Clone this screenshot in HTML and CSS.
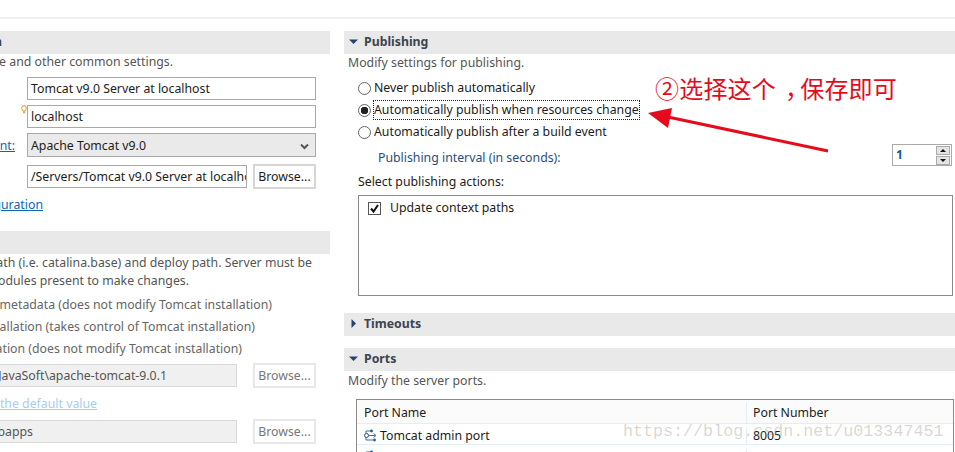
FILE: index.html
```html
<!DOCTYPE html>
<html lang="en">
<head>
<meta charset="utf-8">
<title>Server overview</title>
<link rel="stylesheet" href="styles.css">
</head>
<body>
<div class="topline"></div>
<main class="columns">
  <section class="left">
    <div class="bar"><span class="end e3 bartitle">General Information</span></div>
    <p class="end e173 desc d1">Specify the host name and other common settings.</p>
    <div class="form">
      <div class="row r1"><div class="field f289">Tomcat v9.0 Server at localhost</div></div>
      <div class="row r2"><div class="field f289">localhost</div></div>
      <div class="row r3"><div class="select"><span>Apache Tomcat v9.0</span><svg class="chev" width="9" height="7" viewBox="0 0 9 7"><path d="M1 1.500 4.500 5 8 1.500" fill="none" stroke="#555" stroke-width="2"/></svg></div></div>
      <div class="row r4"><div class="field f220 nowrapclip">/Servers/Tomcat v9.0 Server at localhost.config</div><button class="btn">Browse...</button></div>
    </div>
    <div class="end e15 link runtime">Runtime Environment:</div>
    <svg class="bulb" width="6" height="9" viewBox="0 0 6 9"><path d="M.7 3a2.300 2.300 0 1 1 4.600 0c0 1-1 2-1.300 3.200H2C1.700 5 .7 4 .7 3Z" fill="#fff" stroke="#e09030"/><path d="M2 7.700h2" stroke="#e09030"/></svg>
    <a class="end e43 link cfg">Open launch configuration</a>
    <div class="bar bar2"></div>
    <p class="end e312 desc d2">Specify the server path (i.e. catalina.base) and deploy path. Server must be</p>
    <p class="end e189 desc d3">published with no modules present to make changes.</p>
    <p class="end e272 muted m1">Use workspace metadata (does not modify Tomcat installation)</p>
    <p class="end e255 muted m2">Use Tomcat installation (takes control of Tomcat installation)</p>
    <p class="end e242 muted m3">Use custom location (does not modify Tomcat installation)</p>
    <div class="row r5"><div class="field off f237"><span class="end e167 infield">C:\Program Files\JavaSoft\apache-tomcat-9.0.1</span></div><button class="btn off">Browse...</button></div>
    <a class="end e97 link off-link">Set deploy path to the default value</a>
    <div class="row r6"><div class="field off f237"><span class="end e33 infield">wtpwebapps</span></div><button class="btn off">Browse...</button></div>
  </section>

  <section class="right">
    <div class="bar"><svg class="tw" width="9" height="9" viewBox="0 0 9 9"><path d="M0 2.500h9L4.500 7Z" fill="#24456e"/></svg><span class="bartitle">Publishing</span></div>
    <p class="desc rd1">Modify settings for publishing.</p>
    <div class="radios">
      <label class="radio"><span class="dot"></span><span>Never publish automatically</span></label>
      <label class="radio"><span class="dot on"></span><span class="focus">Automatically publish when resources change</span></label>
      <label class="radio"><span class="dot"></span><span>Automatically publish after a build event</span></label>
    </div>
    <div class="interval">
      <span class="intlabel">Publishing interval (in seconds):</span>
      <div class="spinner"><span class="val">1</span><span class="spins"><span class="spin"><i class="up"></i></span><span class="spin"><i class="down"></i></span></span></div>
    </div>
    <div class="actlabel">Select publishing actions:</div>
    <div class="actions">
      <div class="check"><svg class="cb" width="13" height="13" viewBox="0 0 13 13"><rect x=".5" y=".5" width="12" height="12" fill="#fff" stroke="#555"/><path d="M3 6.500 5.500 9.500 10 3" fill="none" stroke="#111" stroke-width="2"/></svg><span>Update context paths</span></div>
    </div>
    <div class="bar timeouts"><svg class="tw" width="9" height="9" viewBox="0 0 9 9"><path d="M2.500 0v9L7 4.500Z" fill="#24456e"/></svg><span class="bartitle">Timeouts</span></div>
    <div class="bar ports"><svg class="tw" width="9" height="9" viewBox="0 0 9 9"><path d="M0 2.500h9L4.500 7Z" fill="#24456e"/></svg><span class="bartitle">Ports</span></div>
    <p class="desc rd2">Modify the server ports.</p>
    <div class="table">
      <div class="tr th"><div class="c1">Port Name</div><div class="c2">Port Number</div></div>
      <div class="tr"><div class="c1"><svg class="port" width="14" height="14" viewBox="0 0 14 14"><path d="M2 2h5M2 2v9h7M4 6.500h7M9.500 4.500l2.500 2-2.500 2" fill="none" stroke="#3a6ea5"/><circle cx="7.500" cy="2" r="1.400" fill="#1f5a96"/><circle cx="10.500" cy="11" r="1.400" fill="#1f5a96"/><circle cx="2.500" cy="6.500" r="2" fill="#fff" stroke="#1f5a96"/></svg>Tomcat admin port</div><div class="c2">8005</div></div>
      <div class="tr"><div class="c1"><svg class="port" width="14" height="14" viewBox="0 0 14 14"><path d="M2 2h5M2 2v9h7M4 6.500h7M9.500 4.500l2.500 2-2.500 2" fill="none" stroke="#3a6ea5"/><circle cx="7.500" cy="2" r="1.400" fill="#1f5a96"/><circle cx="10.500" cy="11" r="1.400" fill="#1f5a96"/><circle cx="2.500" cy="6.500" r="2" fill="#fff" stroke="#1f5a96"/></svg></div><div class="c2"></div></div>
    </div>
  </section>
</main>
<div class="note">②选择这个<span class="comma">，</span>保存即可</div>
<svg class="arrow" width="200" height="60" viewBox="0 0 200 60"><path d="M188 47 28 13" stroke="#e60b1c" stroke-width="3" fill="none"/><path d="M8 9 32 4 28 24Z" fill="#e60b1c"/></svg>
<div class="wm">https://blog.csdn.net/u013347451</div>
</body>
</html>
```
FILE: styles.css
```css
html, body { margin: 0; padding: 0; height: 452px; overflow: hidden; background: #fff; }
body { position: relative; font: 12.300px/18px "Noto Sans", "Open Sans", sans-serif; color: #1c1c1c; }
p { margin: 0; }

.topline { height: 2px; margin-top: 17px; background: #f0f0f0; }
.columns { display: flex; margin-top: 12px; }
.left { position: relative; width: 330px; flex: none; }
.right { width: 611px; flex: none; margin-left: 14px; }

.bar { height: 23px; background: #e9e9e9; display: flex; align-items: center; }
.bartitle { font-weight: 700; color: #3c4450; font-size: 12.300px; position: relative; top: -1px; }
.tw { margin: 0 6px 0 5px; flex: none; position: relative; top: -1px; }
.end { display: flex; justify-content: flex-end; white-space: nowrap; }
.e3 { width: 2px; } .e15 { width: 15px; } .e33 { width: 33px; } .e43 { width: 43px; }
.e97 { width: 97px; } .e167 { width: 167px; } .e173 { width: 173px; } .e189 { width: 189px; }
.e242 { width: 242px; } .e255 { width: 255px; } .e272 { width: 272px; } .e312 { width: 312px; }

.desc { color: #555; }
.d1 { margin-top: -1px; }
.link { color: #0a67b8; text-decoration: underline; }

.form { margin-top: 6px; }
.row { display: flex; margin-left: 27px; align-items: center; }
.field { box-sizing: border-box; height: 23px; line-height: 21px; border: 1px solid #a9a9a9; padding-left: 3px; background: #fff; overflow: hidden; white-space: nowrap; }
.f289 { width: 289px; }
.f220 { width: 220px; }
.f237 { width: 237px; margin-left: -27px; padding-left: 0; border-left: 0; }
.field.off { background: #f0f0f0; border-color: #d9d9d9; color: #555; }
.btn { box-sizing: border-box; width: 63px; height: 25px; margin-left: 6px; padding: 0; font: inherit; color: #1c1c1c; background: #fff; border: 2px solid #d6d6d6; }
.btn.off { margin-left: 16px; color: #777; border-color: #e8e8e8; }
.r2 { margin-top: 5px; }
.r3 { margin-top: 5px; }
.r4 { margin-top: 7px; }
.select { box-sizing: border-box; width: 289px; height: 24px; display: flex; align-items: center; justify-content: space-between; padding: 2px 6px 0 3px; background: #eaeaea; border: 1px solid #a9a9a9; }
.runtime { position: absolute; top: 106px; left: 0; }
.bulb { position: absolute; top: 74px; left: 21px; }
.cfg { margin-top: 7px; }
.bar2 { margin-top: 17px; }
.d2 { margin-top: 0; }
.muted { color: #666; }
.m1 { margin-top: 6px; }
.m2 { margin-top: 4px; }
.m3 { margin-top: 4px; }
.r5 { margin-top: 5px; }
.off-link { margin-top: 7px; color: #a8cdf0; }
.r6 { margin-top: 6px; }

.rd1 { margin-top: 0; padding-left: 4px; }
.radios { margin: 7px 0 0 14px; display: flex; flex-direction: column; gap: 4px; }
.radio { display: flex; align-items: center; height: 18px; gap: 3px; }
.dot { box-sizing: border-box; width: 13px; height: 13px; border: 1px solid #666; border-radius: 50%; background: #fff; flex: none; }
.dot.on { background: radial-gradient(circle, #222 0 3.500px, #fff 4px); }
.focus { outline: 1px dotted #222; outline-offset: 0; }
.interval { display: flex; align-items: center; justify-content: space-between; height: 22px; margin-top: 3px; padding: 0 3px 0 34px; }
.intlabel { color: #24507f; position: relative; top: 3px; }
.spinner { box-sizing: border-box; width: 60px; height: 22px; border: 1px solid #aaa; display: flex; justify-content: space-between; align-items: center; padding: 0 1px 0 3px; }
.val { color: #1a5a96; font-weight: 700; }
.spins { display: flex; flex-direction: column; gap: 1px; }
.spin { box-sizing: border-box; width: 14px; height: 9px; border: 1px solid #aaa; background: #e4e4e4; display: flex; align-items: center; justify-content: center; }
.spin i { width: 0; height: 0; border-left: 3px solid transparent; border-right: 3px solid transparent; }
.up { border-bottom: 3px solid #111; }
.down { border-top: 3px solid #111; }
.actlabel { margin: 7px 0 0 14px; }
.actions { box-sizing: border-box; height: 101px; margin: 4px 2px 0 14px; border: 1px solid #8a8a8a; padding: 3px 0 0 9px; }
.check { display: flex; align-items: center; gap: 9px; }
.timeouts { margin-top: 17px; }
.ports { margin-top: 12px; }
.rd2 { margin-top: 1px; padding-left: 4px; }
.table { box-sizing: border-box; width: 598px; margin: 9px 0 0 12px; border: 1px solid #8a8a8a; border-bottom: 0; }
.tr { box-sizing: border-box; display: flex; height: 21px; padding-top: 4px; border-bottom: 1px solid #e3edf9; align-items: center; }
.th { height: 24px; padding-top: 2px; background: #fbfbfb; }
.c1 { box-sizing: border-box; width: 390px; height: 100%; padding-left: 7px; display: flex; align-items: center; border-right: 1px solid #e3edf9; }
.c2 { padding-left: 6px; }
.port { margin-right: 2px; flex: none; }

.note { position: absolute; left: 655px; top: 70px; font: 24px/36px "Noto Sans CJK SC", sans-serif; letter-spacing: .2px; color: #e60b1c; white-space: nowrap; }
.comma { padding-left: 9px; margin-right: -9px; }
.arrow { position: absolute; left: 640px; top: 104px; }
.wm { position: absolute; left: 623px; top: 422px; font: 16.700px/20px "Liberation Mono", monospace; color: rgba(150,150,140,.38); white-space: nowrap; }
```
